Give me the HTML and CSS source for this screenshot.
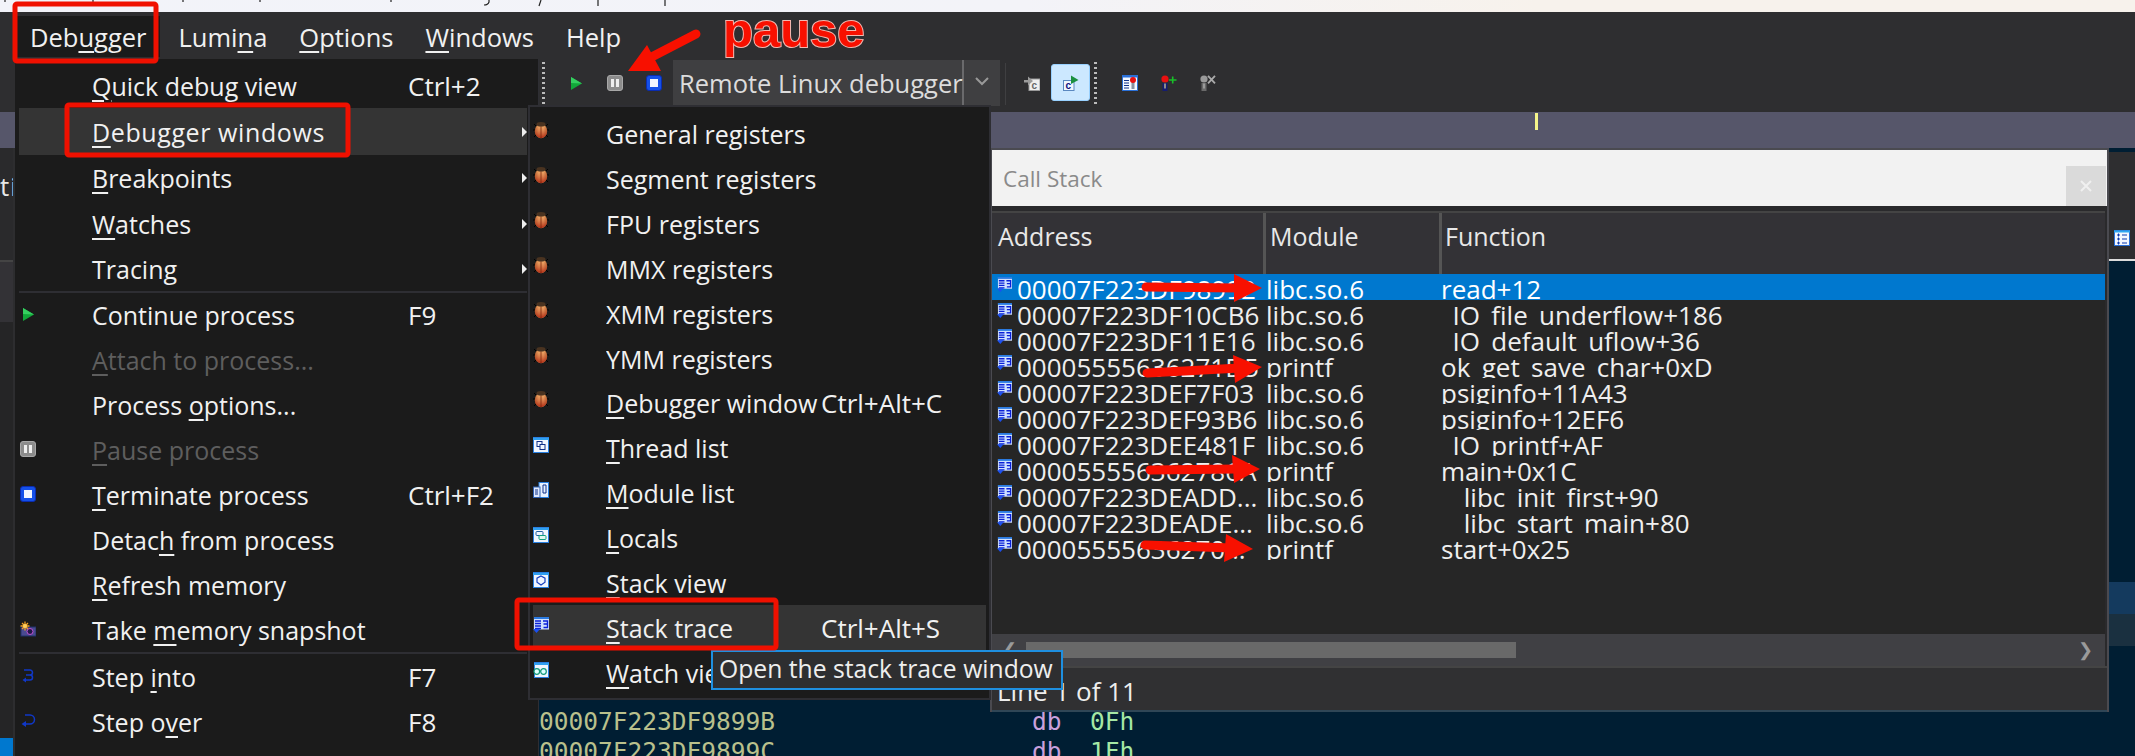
FILE: index.html
```html
<!DOCTYPE html>
<html lang="en">
<head>
<meta charset="utf-8">
<title>Debugger menu</title>
<link rel="stylesheet" href="styles.css">
</head>
<body>
<svg class="sprite" width="0" height="0" aria-hidden="true">
  <defs>
    <linearGradient id="bugG" x1="0" x2="1" y1="0" y2="0">
      <stop offset="0" stop-color="#8c3a12"/><stop offset=".3" stop-color="#f0a860"/><stop offset=".7" stop-color="#f3b06a"/><stop offset="1" stop-color="#8c3a12"/>
    </linearGradient>
    <linearGradient id="bugV" x1="0" x2="0" y1="0" y2="1">
      <stop offset="0" stop-color="#f6b872" stop-opacity=".4"/><stop offset="1" stop-color="#a81808" stop-opacity=".9"/>
    </linearGradient>
    <symbol id="i-bug" viewBox="0 0 16 18">
      <path d="M1 3l3 3M15 3l-3 3M0 9h3M16 9h-3M1 16l3-3M15 16l-3-3" stroke="#000" stroke-width="1" fill="none"/>
      <ellipse cx="8" cy="10" rx="6.200" ry="7.200" fill="url(#bugG)"/>
      <ellipse cx="8" cy="10" rx="6.200" ry="7.200" fill="url(#bugV)"/>
      <path d="M8 5v12" stroke="#7a2a10" stroke-width=".8"/>
      <ellipse cx="8" cy="3.300" rx="4.500" ry="2.300" fill="#4a3320"/>
    </symbol>
    <symbol id="i-play" viewBox="0 0 16 16"><path d="M3 2l11 6.500L3 15z" fill="#12a83a"/><path d="M3 2l11 6.500L3 8z" fill="#35d060"/></symbol>
    <symbol id="i-pause" viewBox="0 0 16 16"><rect x=".5" y=".5" width="15" height="15" rx="2.500" fill="#8c8c8c" stroke="#a8a8a8"/><rect x="4" y="4" width="3" height="8" fill="#eee"/><rect x="9" y="4" width="3" height="8" fill="#eee"/></symbol>
    <symbol id="i-stop" viewBox="0 0 16 16"><rect x=".5" y=".5" width="15" height="15" rx="2.500" fill="#1550e8" stroke="#0a2cb0"/><rect x="4" y="4" width="8" height="8" fill="#f2f6ff"/></symbol>
    <symbol id="i-stack" viewBox="0 0 16 16">
      <rect x="1" y="0" width="15" height="12.500" fill="#cfe0ff"/>
      <path d="M1 1h15" stroke="#2a7ae0" stroke-width="2"/>
      <path d="M2 4h6M2 6.500h6M2 9h6M2 11.500h6" stroke="#0a20d8" stroke-width="1.400"/>
      <path d="M10 4h4.500v3h-4M14.500 7v3.500h-4" fill="none" stroke="#0a20d8" stroke-width="1.400"/>
      <path d="M0 12l3.500 4 3.500-4z" fill="#1a50f0"/>
    </symbol>
    <symbol id="i-thread" viewBox="0 0 16 16"><rect x=".5" y=".5" width="15" height="15" fill="#f0f6ff" stroke="#2a80e0"/><path d="M0 2h16" stroke="#30a0f0" stroke-width="2"/><rect x="4" y="4.500" width="5" height="5" fill="none" stroke="#103088"/><rect x="7" y="7.500" width="5" height="5" fill="#f0f6ff" stroke="#103088"/></symbol>
    <symbol id="i-module" viewBox="0 0 16 16"><rect x="6" y=".5" width="9.500" height="15" fill="#e8f2ff" stroke="#2a80e0"/><path d="M10 3h3v8h-3z" fill="none" stroke="#103088"/><rect x=".5" y="5" width="6.500" height="10.500" fill="#dfeaff" stroke="#3060b0"/><path d="M2 8h3M2 10h3M2 12h3" stroke="#103088"/></symbol>
    <symbol id="i-locals" viewBox="0 0 16 16"><rect x=".5" y=".5" width="15" height="15" fill="#f0f6ff" stroke="#2a80e0"/><path d="M0 2h16" stroke="#30a0f0" stroke-width="2"/><rect x="3" y="4.500" width="7" height="4" rx="1" fill="none" stroke="#2060a0"/><rect x="6" y="8.500" width="7" height="4" rx="1" fill="#e0f8f0" stroke="#10a080"/></symbol>
    <symbol id="i-view" viewBox="0 0 16 16"><rect x=".5" y=".5" width="15" height="15" fill="#f0f6ff" stroke="#2a80e0"/><path d="M0 2h16" stroke="#30a0f0" stroke-width="2"/><path d="M8 4l4 2.200v4L8 13l-4-2.800v-4z" fill="none" stroke="#1840c0" stroke-width="1.200"/></symbol>
    <symbol id="i-watch" viewBox="0 0 16 16"><rect x="1.500" y=".5" width="14" height="15" fill="#f0f6ff" stroke="#2a80e0"/><path d="M1 2h15" stroke="#30a0f0" stroke-width="2"/><circle cx="3.800" cy="9.500" r="2.800" fill="#dff" stroke="#109878" stroke-width="1.200"/><circle cx="10.500" cy="9.500" r="2.800" fill="#dff" stroke="#109878" stroke-width="1.200"/><path d="M6.500 9h1.500" stroke="#109878"/></symbol>
    <symbol id="i-snap" viewBox="0 0 16 16"><rect x="1" y="6" width="15" height="9" fill="#4a4a90" stroke="#20306a"/><circle cx="10" cy="10.500" r="3" fill="#201848" stroke="#c050d0"/><path d="M5 .500v9M.5 5h9M2 2l6 6M8 2L2 8" stroke="#f4a020" stroke-width="1.300"/><circle cx="5" cy="5" r="2" fill="#ffd060"/></symbol>
    <symbol id="i-into" viewBox="0 0 16 16"><path d="M4 2h6a2 2 0 0 1 0 5H6h4a2.500 2.500 0 0 1 0 5H5" fill="none" stroke="#1038c8" stroke-width="1.500"/><path d="M6 9.500l-3.500 2.500L6 14.500z" fill="#1038c8"/></symbol>
    <symbol id="i-over" viewBox="0 0 16 16"><path d="M5 2h5a4.500 4.500 0 0 1 0 9H6" fill="none" stroke="#1038c8" stroke-width="1.500"/><path d="M6 8l-4.500 3L6 14z" fill="#1038c8"/></symbol>
    <symbol id="i-cgray" viewBox="0 0 16 16"><rect x="5" y="4" width="11" height="11.500" fill="#eee" stroke="#999"/><text x="7.500" y="13.500" class="ic-letter ic-gray">c</text><path d="M0 5h4V1.500L9 6l-5 4.500V7.500H0z" fill="#9a9a9a"/></symbol>
    <symbol id="i-cgreen" viewBox="0 0 16 16"><rect x=".5" y="5.500" width="10.500" height="10" fill="#eef6ff" stroke="#5a88c0"/><text x="2.500" y="14" class="ic-letter">c</text><path d="M8 .500l7.500 4.500L8 9z" fill="#1a9040"/></symbol>
    <symbol id="i-bplist" viewBox="0 0 16 16"><rect x=".5" y=".5" width="15" height="15" fill="#f4f8ff" stroke="#2a70d8"/><path d="M0 1.500h16" stroke="#2a70d8" stroke-width="2"/><path d="M2 5.500h5M2 8h5M2 10.500h5M2 13h5" stroke="#103088"/><rect x="9.500" y="6" width="3" height="8" fill="#8890a0"/><circle cx="11" cy="5" r="3" fill="#e81010"/></symbol>
    <symbol id="i-bpadd" viewBox="0 0 16 16"><rect x="1.500" y="8" width="5" height="8" fill="#141c70"/><rect x="3" y="8.500" width="2" height="5" fill="#8a8a8a"/><circle cx="4" cy="4" r="3.600" fill="#e81010"/><path d="M8 5h7.500M11.700 1.500v7" stroke="#18c028" stroke-width="1.600"/></symbol>
    <symbol id="i-bpdel" viewBox="0 0 16 16"><rect x="1.500" y="8" width="5" height="8" fill="#6a6a6a"/><rect x="3" y="8.500" width="2" height="5" fill="#9a9a9a"/><circle cx="4" cy="4" r="3.600" fill="#9a9a9a"/><path d="M8 .800l7 7.500M15 .800l-7 7.500" stroke="#aaa" stroke-width="1.800"/></symbol>
    <symbol id="i-tree" viewBox="0 0 16 16"><rect x=".5" y=".5" width="15" height="15" fill="#f4f8ff" stroke="#2a70d8"/><path d="M0 1.500h16" stroke="#30a8f0" stroke-width="2"/><path d="M3 5h3M3 9h3M3 13h3M4.500 3.500v3M4.500 7.500v3M4.500 11.500v3M8 5h5M8 9h5M8 13h5" stroke="#0838b0"/></symbol>
  </defs>
</svg>

<div class="app">
  <div class="strip"></div>

  <nav class="menubar">
    <span class="mtop mtop-open">Deb<u>u</u>gger</span>
    <span class="mtop">Lumi<u>n</u>a</span>
    <span class="mtop"><u>O</u>ptions</span>
    <span class="mtop"><u>W</u>indows</span>
    <span class="mtop">Help</span>
  </nav>

  <div class="toolbar">
    <span class="dots"></span>
    <button class="tb tb-first"><svg class="ic"><use href="#i-play"/></svg></button>
    <button class="tb"><svg class="ic"><use href="#i-pause"/></svg></button>
    <button class="tb"><svg class="ic"><use href="#i-stop"/></svg></button>
    <div class="combo"><span class="combo-text">Remote Linux debugger</span><span class="combo-arrow"><svg class="chev" viewBox="0 0 14 9"><path d="M1 1l6 6 6-6" fill="none" stroke="#999" stroke-width="2"/></svg></span></div>
    <span class="tsep"></span>
    <button class="tb tb-c"><svg class="ic"><use href="#i-cgray"/></svg></button>
    <button class="tb tb-active"><svg class="ic"><use href="#i-cgreen"/></svg></button>
    <span class="dots dots-2"></span>
    <button class="tb tb-bp"><svg class="ic"><use href="#i-bplist"/></svg></button>
    <button class="tb"><svg class="ic"><use href="#i-bpadd"/></svg></button>
    <button class="tb"><svg class="ic"><use href="#i-bpdel"/></svg></button>
  </div>

  <div class="band"><span class="band-mark"></span></div>

  <main class="work">
    <aside class="ldock">
      <div class="ld-tab"><span class="ld-ti">ti</span></div>
      <div class="ld-head"></div>
      <div class="ld-list"></div>
      <div class="ld-sel"></div>
    </aside>
    <section class="code">
      <div class="cl"><span class="c-addr">00007F223DF9899B</span><span class="c-op">db</span><span class="c-val">0Fh</span></div>
      <div class="cl"><span class="c-addr">00007F223DF9899C</span><span class="c-op">db</span><span class="c-val">1Fh</span></div>
    </section>
    <aside class="rdock">
      <div class="rd-bar"><svg class="ic"><use href="#i-tree"/></svg></div>
      <div class="rd-code"><div class="rd-a"></div><div class="rd-b"></div></div>
    </aside>
  </main>

  <section class="dialog">
    <header class="d-title"><span>Call Stack</span><span class="d-close"><svg viewBox="0 0 12 12" class="d-x"><path d="M1 1l10 10M11 1L1 11" stroke="#f0f0f0" stroke-width="2"/></svg></span></header>
    <div class="d-table">
      <div class="t-head"><span class="th th-a">Address</span><span class="th th-m">Module</span><span class="th th-f">Function</span></div>
      <div class="t-body">
        <div class="tr tr-sel"><svg class="ic ic-r"><use href="#i-stack"/></svg><span class="td-a">00007F223DF98992</span><span class="td-m">libc.so.6</span><span class="td-f">read+12</span></div>
        <div class="tr"><svg class="ic ic-r"><use href="#i-stack"/></svg><span class="td-a">00007F223DF10CB6</span><span class="td-m">libc.so.6</span><span class="td-f">_IO_file_underflow+186</span></div>
        <div class="tr"><svg class="ic ic-r"><use href="#i-stack"/></svg><span class="td-a">00007F223DF11E16</span><span class="td-m">libc.so.6</span><span class="td-f">_IO_default_uflow+36</span></div>
        <div class="tr"><svg class="ic ic-r"><use href="#i-stack"/></svg><span class="td-a">00005555636271D5</span><span class="td-m">printf</span><span class="td-f">ok_get_save_char+0xD</span></div>
        <div class="tr"><svg class="ic ic-r"><use href="#i-stack"/></svg><span class="td-a">00007F223DEF7F03</span><span class="td-m">libc.so.6</span><span class="td-f">psiginfo+11A43</span></div>
        <div class="tr"><svg class="ic ic-r"><use href="#i-stack"/></svg><span class="td-a">00007F223DEF93B6</span><span class="td-m">libc.so.6</span><span class="td-f">psiginfo+12EF6</span></div>
        <div class="tr"><svg class="ic ic-r"><use href="#i-stack"/></svg><span class="td-a">00007F223DEE481F</span><span class="td-m">libc.so.6</span><span class="td-f">_IO_printf+AF</span></div>
        <div class="tr"><svg class="ic ic-r"><use href="#i-stack"/></svg><span class="td-a">000055556362786A</span><span class="td-m">printf</span><span class="td-f">main+0x1C</span></div>
        <div class="tr"><svg class="ic ic-r"><use href="#i-stack"/></svg><span class="td-a">00007F223DEADD...</span><span class="td-m">libc.so.6</span><span class="td-f">__libc_init_first+90</span></div>
        <div class="tr"><svg class="ic ic-r"><use href="#i-stack"/></svg><span class="td-a">00007F223DEADE...</span><span class="td-m">libc.so.6</span><span class="td-f">__libc_start_main+80</span></div>
        <div class="tr"><svg class="ic ic-r"><use href="#i-stack"/></svg><span class="td-a">00005555636270...</span><span class="td-m">printf</span><span class="td-f">start+0x25</span></div>
      </div>
      <div class="t-scroll">
        <span class="s-arrow">&#x276E;</span>
        <span class="s-thumb"></span>
        <span class="s-arrow s-right">&#x276F;</span>
      </div>
    </div>
    <footer class="d-status">Line 1 of 11</footer>
  </section>

  <div class="menu">
    <div class="item"><span class="ico"></span><span class="lbl"><u>Q</u>uick debug view</span><span class="sc">Ctrl+2</span></div>
    <div class="item item-hover item-main"><span class="ico"></span><span class="lbl lbl-wide"><u>D</u>ebugger windows</span><span class="sub"></span></div>
    <div class="item item-46"><span class="ico"></span><span class="lbl"><u>B</u>reakpoints</span><span class="sub"></span></div>
    <div class="item"><span class="ico"></span><span class="lbl"><u>W</u>atches</span><span class="sub"></span></div>
    <div class="item"><span class="ico"></span><span class="lbl">Tracin<u>g</u></span><span class="sub"></span></div>
    <div class="sep sep-first"></div>
    <div class="item"><span class="ico"><svg class="ic"><use href="#i-play"/></svg></span><span class="lbl">Continue process</span><span class="sc">F9</span></div>
    <div class="item item-off"><span class="ico"></span><span class="lbl"><u>A</u>ttach to process...</span></div>
    <div class="item"><span class="ico"></span><span class="lbl">Process <u>o</u>ptions...</span></div>
    <div class="item item-off"><span class="ico"><svg class="ic"><use href="#i-pause"/></svg></span><span class="lbl"><u>P</u>ause process</span></div>
    <div class="item"><span class="ico"><svg class="ic"><use href="#i-stop"/></svg></span><span class="lbl"><u>T</u>erminate process</span><span class="sc">Ctrl+F2</span></div>
    <div class="item"><span class="ico"></span><span class="lbl">Detac<u>h</u> from process</span></div>
    <div class="item"><span class="ico"></span><span class="lbl"><u>R</u>efresh memory</span></div>
    <div class="item"><span class="ico"><svg class="ic"><use href="#i-snap"/></svg></span><span class="lbl">Take <u>m</u>emory snapshot</span></div>
    <div class="sep"></div>
    <div class="item"><span class="ico"><svg class="ic"><use href="#i-into"/></svg></span><span class="lbl">Step <u>i</u>nto</span><span class="sc">F7</span></div>
    <div class="item"><span class="ico"><svg class="ic"><use href="#i-over"/></svg></span><span class="lbl">Step o<u>v</u>er</span><span class="sc">F8</span></div>
  </div>

  <div class="submenu">
    <div class="sitem"><span class="sico"><svg class="ic ic-bug"><use href="#i-bug"/></svg></span><span class="slbl">General registers</span></div>
    <div class="sitem"><span class="sico"><svg class="ic ic-bug"><use href="#i-bug"/></svg></span><span class="slbl">Segment registers</span></div>
    <div class="sitem"><span class="sico"><svg class="ic ic-bug"><use href="#i-bug"/></svg></span><span class="slbl">FPU registers</span></div>
    <div class="sitem"><span class="sico"><svg class="ic ic-bug"><use href="#i-bug"/></svg></span><span class="slbl">MMX registers</span></div>
    <div class="sitem"><span class="sico"><svg class="ic ic-bug"><use href="#i-bug"/></svg></span><span class="slbl">XMM registers</span></div>
    <div class="sitem"><span class="sico"><svg class="ic ic-bug"><use href="#i-bug"/></svg></span><span class="slbl">YMM registers</span></div>
    <div class="sitem sitem-44"><span class="sico"><svg class="ic ic-bug"><use href="#i-bug"/></svg></span><span class="slbl"><u>D</u>ebugger window</span><span class="sc">Ctrl+Alt+C</span></div>
    <div class="sitem"><span class="sico"><svg class="ic"><use href="#i-thread"/></svg></span><span class="slbl"><u>T</u>hread list</span></div>
    <div class="sitem"><span class="sico"><svg class="ic"><use href="#i-module"/></svg></span><span class="slbl"><u>M</u>odule list</span></div>
    <div class="sitem"><span class="sico"><svg class="ic"><use href="#i-locals"/></svg></span><span class="slbl"><u>L</u>ocals</span></div>
    <div class="sitem"><span class="sico"><svg class="ic"><use href="#i-view"/></svg></span><span class="slbl"><u>S</u>tack view</span></div>
    <div class="sitem item-hover"><span class="sico"><svg class="ic"><use href="#i-stack"/></svg></span><span class="slbl"><u>S</u>tack trace</span><span class="sc">Ctrl+Alt+S</span></div>
    <div class="sitem"><span class="sico"><svg class="ic"><use href="#i-watch"/></svg></span><span class="slbl"><u>W</u>atch view</span></div>
  </div>

  <div class="tooltip">Open the stack trace window</div>

  <svg class="marks" viewBox="0 0 2135 756" aria-hidden="true">
    <g class="ticks">
      <path d="M5 0v2M93 0v2M183 0v2M260 0v2M391 0v2M489 0v2q-1 3-5 3M541 0l-2 6M598 0v6M665 0v6"/>
    </g>
    <g class="boxes">
      <rect x="15" y="4" width="141" height="57" rx="2"/>
      <rect x="67" y="105" width="281" height="50" rx="2"/>
      <rect x="517" y="600" width="259" height="48" rx="2"/>
    </g>
    <g class="arrows">
      <path class="shaft" d="M696 34L640 63"/><polygon points="628,71 647,45 661,71"/>
      <path class="shaft" d="M1146 287L1240 288"/><polygon points="1262,288 1234,274 1234,302"/>
      <path class="shaft" d="M1147 373L1240 368"/><polygon points="1262,367 1233,355 1235,383"/>
      <path class="shaft" d="M1150 470L1238 469"/><polygon points="1260,469 1232,455 1234,483"/>
      <path class="shaft" d="M1145 545L1232 548"/><polygon points="1253,549 1226,534 1224,562"/>
    </g>
  </svg>
  <div class="pause-note">pause</div>
</div>
</body>
</html>
```

FILE: styles.css
```css
* { box-sizing: border-box; }
html, body { margin: 0; padding: 0; background: #2e2e30; }
body { font-family: "Open Sans", "Noto Sans", sans-serif; color: #f1f1f1; }
u { text-decoration-thickness: 2px; text-underline-offset: 4px; }
.sprite { position: absolute; }
.ic { width: 16px; height: 16px; display: block; }
.ic-letter { font: bold 10px "Liberation Sans", sans-serif; fill: #101080; }
.ic-gray { fill: #666; }

.app { position: relative; width: 2135px; height: 756px; overflow: hidden; display: flex; flex-direction: column; background: #2e2e30; }
.strip { height: 12px; flex: none; background: linear-gradient(90deg, #f2f3f9 0, #f3f3f8 48%, #f7f2ec 72%); }

.menubar { height: 48px; flex: none; display: flex; align-items: stretch; padding: 4px 0 3px 17px; font-size: 25.500px; }
.mtop { display: flex; align-items: center; padding: 0 13px; margin-right: 6px; }
.mtop-open { background: #1b1b1b; }

.toolbar { height: 52px; flex: none; display: flex; align-items: flex-start; padding-left: 542px; }
.dots { width: 3px; height: 43px; margin-top: 2px; flex: none; background: repeating-linear-gradient(180deg, #bbb 0 2px, transparent 2px 5px); }
.dots-2 { margin-left: 4px; }
.tb { width: 39px; height: 37px; margin: 4px 0 0; padding: 0; border: 1px solid transparent; border-radius: 3px; background: none; display: flex; align-items: center; justify-content: center; flex: none; }
.tb-first { margin-left: 11px; }
.tb-c { margin-left: 6px; }
.tb-active { background: #cce8ff; border-color: #99d1ff; }
.tb-bp { margin-left: 13px; }
.combo { width: 327px; height: 46px; margin-left: 0; background: #3f3f41; display: flex; flex: none; font-size: 25.500px; color: #dcdcdc; }
.combo-text { width: 291px; padding-left: 6px; line-height: 46px; white-space: nowrap; border-right: 2px solid #6a6a6c; }
.combo-arrow { flex: 1; display: flex; align-items: center; justify-content: center; }
.chev { width: 14px; height: 9px; margin-top: -4px; }
.tsep { width: 1px; height: 42px; margin: 3px 0 0 5px; background: #3f3f41; flex: none; }

.band { height: 36px; flex: none; background: #56566a; position: relative; }
.band-mark { position: absolute; left: 1535px; top: 1px; width: 3px; height: 17px; background: #f5f58a; }

.work { flex: 1; min-height: 0; display: flex; background: #001e33; }
.ldock { width: 15px; flex: none; display: flex; flex-direction: column; border-right: 2px solid #2d2d2f; background: #252526; }
.ld-tab { height: 112px; background: #2a2a2c; overflow: hidden; }
.ld-ti { display: block; margin-top: 20px; font-size: 26px; line-height: 36px; color: #e8e8e8; letter-spacing: 1px; }
.ld-head { height: 62px; background: #333236; border-top: 2px solid #444; }
.ld-list { flex: 1; }
.ld-sel { height: 18px; background: #0078cf; }

.code { flex: 1; min-width: 0; padding: 559px 0 0 524px; font-family: "DejaVu Sans Mono", monospace; font-size: 24.500px; line-height: 30px; }
.cl { display: flex; white-space: nowrap; }
.c-addr { width: 493px; color: #b9c08c; }
.c-op { width: 58px; color: #c9a0dc; }
.c-val { color: #a5e8a5; }

.rdock { width: 26px; flex: none; display: flex; flex-direction: column; margin-top: 0; }
.rd-bar { height: 109px; margin-top: 4px; background: #2e2e30; border-bottom: 2px solid #dcdcdc; display: flex; align-items: flex-end; justify-content: center; padding-bottom: 13px; }
.rd-code { padding-top: 321px; }
.rd-a { height: 32px; background: #143a5e; }
.rd-b { height: 32px; background: #1a3040; }

.dialog { position: absolute; left: 990px; top: 148px; width: 1119px; height: 564px; display: flex; flex-direction: column; background: #2a2a2c; border: solid #4a4a50; border-width: 2px 2px 0 2px; }
.d-title { height: 56px; flex: none; background: #f2f2f2; color: #8a8a8a; font-size: 22.500px; display: flex; align-items: center; justify-content: space-between; padding: 0 1px 0 11px; }
.d-close { width: 40px; height: 40px; margin-top: 15px; background: #dadada; display: flex; align-items: center; justify-content: center; }
.d-x { width: 12px; height: 12px; }
.d-table { flex: none; margin-top: 5px; border-top: 2px solid #444; display: flex; flex-direction: column; margin-right: 2px; }
.t-head { height: 61px; flex: none; background: #333236; display: flex; font-size: 25px; color: #e8e8e8; }
.th { padding: 1px 0 0 4px; line-height: 44px; border-right: 3px solid #555; }
.th-a { width: 274px; padding-left: 6px; }
.th-m { width: 176px; }
.th-f { flex: 1; padding-left: 3px; border-right: 0; }
.t-body { height: 360px; flex: none; background: #262626; font-size: 26px; color: #efefef; }
.tr { height: 26px; display: flex; align-items: flex-start; overflow: hidden; line-height: 30px; white-space: nowrap; padding-left: 5px; }
.tr-sel { background: #0078cf; color: #fff; }
.ic-r { width: 15px; height: 15px; margin-top: 3px; flex: none; }
.td-a { width: 254px; padding-left: 5px; overflow: hidden; flex: none; }
.td-m { width: 175px; flex: none; }
.td-f { flex: 1; }
.t-scroll { height: 32px; flex: none; background: #404044; display: flex; align-items: center; position: relative; padding-left: 34px; color: #9a9a9a; font-size: 18px; }
.s-arrow { position: absolute; left: 10px; top: 3px; line-height: 24px; }
.s-right { left: auto; right: 12px; }
.s-thumb { width: 490px; height: 16px; background: #696969; }
.d-status { flex: none; height: 46px; background: #303032; border-top: 2px solid #444; font-size: 26px; line-height: 46px; padding-left: 5px; color: #eee; border-bottom: 2px solid #2f4656; }

.menu { position: absolute; left: 15px; top: 59px; width: 524px; height: 697px; padding: 4px 0 0 4px; background: #1b1b1b; border-right: 1px solid #2e2e33; font-size: 25px; color: #f1f1f1; }
.item { height: 45px; display: flex; align-items: center; white-space: nowrap; width: 508px; }
.item-main { height: 47px; padding-top: 1px; }
.item-46 { height: 46px; }
.item-hover { background: #343434; }
.ico { width: 73px; flex: none; padding-left: 1px; }
.ico .ic { margin-top: -2px; }
.lbl { width: 316px; flex: none; }
.lbl-wide { letter-spacing: .6px; }
.sc { font-size: 26px; }
.item-off { color: #5e5e5e; }
.sub { margin-left: auto; width: 0; height: 0; border-left: 5px solid #eee; border-top: 5px solid transparent; border-bottom: 5px solid transparent; }
.sep { height: 2px; width: 508px; flex: none; background: #2e2e33; }
.sep-first { margin-bottom: -1px; }

.submenu { position: absolute; left: 528px; top: 105px; width: 463px; height: 595px; padding: 4px 3px 0; background: #1b1b1b; border: 2px solid #2e2e33; font-size: 25px; }
.sitem { height: 45px; display: flex; align-items: center; white-space: nowrap; }
.sitem-44 { height: 44px; }
.sico { width: 73px; flex: none; }
.sico .ic { margin-top: -6px; }
.sico .ic-bug { height: 18px; margin-top: -8px; }
.slbl { width: 215px; flex: none; overflow: hidden; }

.tooltip { position: absolute; left: 711px; top: 650px; width: 352px; height: 40px; padding-left: 6px; background: #2e2e30; border: 2px solid #1e8fe0; font-size: 24.700px; line-height: 33px; color: #eee; white-space: nowrap; }

.marks { position: absolute; left: 0; top: 0; width: 2135px; height: 756px; pointer-events: none; }
.ticks path { fill: none; stroke: #222; stroke-width: 1.200; }
.boxes rect { fill: none; stroke: #f01000; stroke-width: 5; }
.arrows polygon { fill: #f81000; }
.arrows .shaft { fill: none; stroke: #f81000; stroke-width: 9; stroke-linecap: round; }
.pause-note { position: absolute; left: 723px; top: 0; font: bold 49px/60px "Liberation Sans", sans-serif; color: #f81000; -webkit-text-stroke: 2px #f2b8b0; paint-order: stroke fill; }
```
